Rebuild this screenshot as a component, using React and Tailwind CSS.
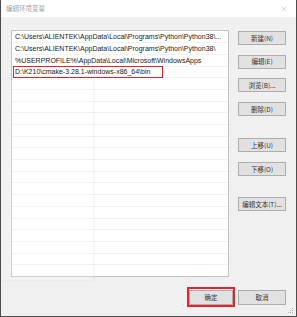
import { X } from 'lucide-react';

const paths = [
  'C:\\Users\\ALIENTEK\\AppData\\Local\\Programs\\Python\\Python38\\...',
  'C:\\Users\\ALIENTEK\\AppData\\Local\\Programs\\Python\\Python38\\',
  '%USERPROFILE%\\AppData\\Local\\Microsoft\\WindowsApps',
  'D:\\K210\\cmake-3.28.1-windows-x86_64\\bin',
];

const rows = Array.from({ length: 21 }, (_, i) => paths[i] || '');

const font = { fontFamily: '"Noto Sans CJK SC", "Noto Sans", sans-serif' };

function Btn({ children, className = '' }) {
  return (
    <div className={`flex h-[14px] w-[48px] items-center justify-center border border-[#adadad] bg-[#e1e1e1] text-[6.5px] leading-none text-[#333] ${className}`}>
      {children}
    </div>
  );
}

export default function App() {
  return (
    <div className="relative flex h-[317px] w-[297px] flex-col border-x border-b border-[#4d4d4d] bg-[#f0f0f0]" style={font}>
      {/* title bar */}
      <div className="flex h-[17px] items-center justify-between bg-white pl-[5px] pr-[8px]">
        <span className="text-[6.5px] leading-none text-[#a0a0a0]">编辑环境变量</span>
        <X size={8} strokeWidth={1.2} className="text-[#999]" />
      </div>

      <div className="flex flex-1 flex-col px-[10px]">
        <div className="flex items-start">
          {/* path list */}
          <div className="mt-[13px] flex h-[247px] w-[218px] flex-col overflow-hidden border border-[#c4c4c4] bg-white pt-[0.5px]">
            {rows.map((p, i) => (
              <div key={i} className="flex h-[11.7px] shrink-0 items-center border-b border-[#f2f2f2] pl-[3px]">
                {i === 3 ? (
                  <span className="-ml-[2px] flex h-[12.5px] w-[150px] items-center border-[1.5px] border-[#e8202a] pl-[1px] text-[7px] leading-none text-[#1a1a1a]" style={{ fontFamily: '"Liberation Sans", Arial, sans-serif' }}>
                    {p}
                  </span>
                ) : (
                  <span className="whitespace-nowrap text-[7px] leading-none text-[#1a1a1a]" style={{ fontFamily: '"Liberation Sans", Arial, sans-serif' }}>
                    {p}
                  </span>
                )}
              </div>
            ))}
          </div>

          {/* side buttons */}
          <div className="ml-[9px] mt-[14px] flex flex-col">
            <Btn>新建(N)</Btn>
            <Btn className="mt-[9.7px]">编辑(E)</Btn>
            <Btn className="mt-[9.7px]">浏览(B)...</Btn>
            <Btn className="mt-[9.7px]">删除(D)</Btn>
            <Btn className="mt-[22px]">上移(U)</Btn>
            <Btn className="mt-[10px]">下移(O)</Btn>
            <Btn className="mt-[21px]">编辑文本(T)...</Btn>
          </div>
        </div>

        {/* bottom buttons */}
        <div className="mt-[10px] flex justify-end gap-[3px] pr-[0px]">
          <div className="flex h-[20px] w-[48px] flex-col border-2 border-[#e8202a]">
            <div className="mt-[1px] flex h-[15px] items-center justify-center border border-[#adadad] bg-[#e1e1e1] text-[6.5px] leading-none text-[#333]">
              确定
            </div>
          </div>
          <Btn className="mt-[3px] h-[15px]">取消</Btn>
        </div>
      </div>

      {/* faint ghost shadow over left part */}
      <div className="pointer-events-none absolute left-0 top-[80px] h-[200px] w-[92px] bg-white/20 shadow-[1px_0_2px_rgba(0,0,0,0.06)]" />

      {/* resize grip */}
      <svg className="absolute bottom-[2px] right-[2px]" width="6" height="6" viewBox="0 0 6 6">
        <rect x="4" y="0" width="1" height="1" fill="#b0b0b0" />
        <rect x="2" y="2" width="1" height="1" fill="#b0b0b0" />
        <rect x="4" y="2" width="1" height="1" fill="#b0b0b0" />
        <rect x="0" y="4" width="1" height="1" fill="#b0b0b0" />
        <rect x="2" y="4" width="1" height="1" fill="#b0b0b0" />
        <rect x="4" y="4" width="1" height="1" fill="#b0b0b0" />
      </svg>
    </div>
  );
}
